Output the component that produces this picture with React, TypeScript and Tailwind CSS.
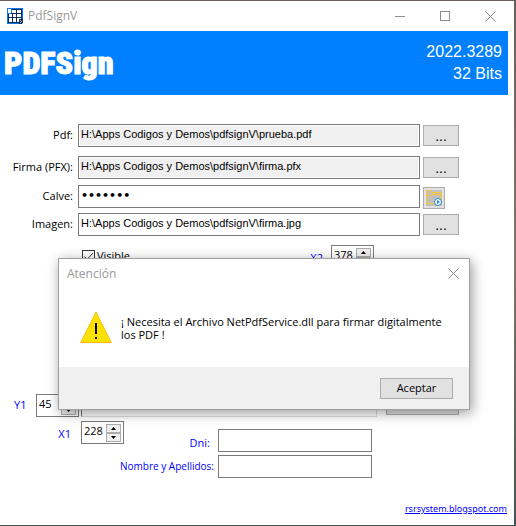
import { ComponentPropsWithoutRef, ReactNode } from 'react'
import { twMerge } from 'tailwind-merge'

const FIELD = 'h-[23px] min-w-0 flex-1 border border-[#7a7a7a] px-0.5 text-black outline-none'

function Button({ className, ...props }: ComponentPropsWithoutRef<'button'>) {
  return (
    <button
      type="button"
      {...props}
      className={twMerge(
        'flex h-[21px] shrink-0 items-center justify-center border border-[#adadad] bg-[#e1e1e1] text-black',
        className,
      )}
    />
  )
}

interface FieldRowProps extends ComponentPropsWithoutRef<'input'> {
  id: string
  label: string
  action?: ReactNode
}

function FieldRow({ id, label, action, className, ...props }: FieldRowProps) {
  return (
    <div className="flex h-[23px] items-center">
      <label htmlFor={id} className="mr-[5px] w-[73px] shrink-0 text-right whitespace-nowrap">
        {label}
      </label>
      <input
        id={id}
        {...props}
        className={twMerge(
          FIELD,
          "bg-white pb-[3px] font-['Liberation_Sans',Arial,sans-serif] read-only:bg-[#f0f0f0] read-only:shadow-[inset_0_0_0_1px_#fff]",
          className,
        )}
      />
      <div className="ml-[3px] w-9 shrink-0">
        {action ?? (
          <Button
            className="w-full font-['Liberation_Sans',Arial,sans-serif] text-sm leading-4"
            aria-label={`Buscar ${label}`}
          >
            ...
          </Button>
        )}
      </div>
    </div>
  )
}

interface SpinnerProps {
  id: string
  value: string
}

function Spinner({ id, value }: SpinnerProps) {
  const step =
    'flex h-[9px] w-[15px] items-center justify-center border border-[#adadad] bg-[#f0f0f0]'

  return (
    <div className="flex h-[23px] w-[43px] shrink-0 items-center border border-[#7a7a7a] bg-white">
      <input
        id={id}
        defaultValue={value}
        className="w-0 min-w-0 flex-1 pb-0.5 pl-0.5 text-black outline-none"
      />
      <div className="mr-0.5">
        <button type="button" aria-label="Subir" className={step}>
          <svg width="5" height="3" viewBox="0 0 5 3">
            <path d="M0 3 2.5 0 5 3z" />
          </svg>
        </button>
        <button type="button" aria-label="Bajar" className={step}>
          <svg width="5" height="3" viewBox="0 0 5 3">
            <path d="M0 0 2.5 3 5 0z" />
          </svg>
        </button>
      </div>
    </div>
  )
}

function CloseIcon() {
  return (
    <svg width="11" height="11" viewBox="0 0 11 11" stroke="#8c8c8c">
      <path d="M.5.5l10 10M10.5.5l-10 10" />
    </svg>
  )
}

function AppIcon() {
  return (
    <svg width="16" height="16" viewBox="0 0 16 16" shapeRendering="crispEdges">
      <path fill="#0b2c58" d="M0 0h16v16H0z" />
      <path
        fill="#fff"
        d="M1 1h3v4H1zM5 2h4v3H5zM10 2h4v3h-4zM2 6h3v3H2zM6 6h3v3H6zM10 6h4v3h-4zM2 10h3v4H2zM6 10h3v4H6zM10 10h4v1h-4zM10 11h2v3h-2z"
      />
      <path fill="#0a7cf0" d="M0 0h16v1H0zM0 1h1v14H0zM4 1h1v4H4zM1 5h3v1H1zM0 15h12v1H0zM15 1h1v10h-1z" />
      <path fill="#b8c8dc" d="M13 12h1v1h-1zM14 13h1v1h-1zM13 14h1v1h-1zM15 15h1v1h-1z" />
    </svg>
  )
}

function FolderIcon() {
  return (
    <svg width="16" height="16" viewBox="0 0 16 16" fill="none">
      <path fill="#c0c0c0" d="M0 0h16v16H0z" />
      <path stroke="#fcc62d" d="M.5 13.5V.5h4l1 2h9.500v11H.5zM.5 5.500h5l1-1H15" />
      <circle cx="12" cy="12" r="3.500" fill="#fff" stroke="#1c84d4" />
      <path fill="#1c84d4" d="M11 10l3 2-3 2z" />
    </svg>
  )
}

function WarningIcon() {
  return (
    <svg width="32" height="32" viewBox="0 0 32 32" className="shrink-0">
      <path d="M16 1 31.300 31.500H.7z" fill="#fde100" stroke="#fdb913" />
      <path d="M15 12h2v11h-2zM15 26h2v2h-2z" fill="#000" />
    </svg>
  )
}

function AttentionDialog() {
  return (
    <div
      role="alertdialog"
      aria-labelledby="dialog-title"
      aria-describedby="dialog-message"
      className="absolute top-[257px] right-[44px] left-[58px] border border-[#a0a0a0] bg-white shadow-[2px_3px_12px_rgba(0,0,0,0.4)]"
    >
      <div className="flex h-7 items-center justify-between pr-2.5 pl-2">
        <h2 id="dialog-title" className="pt-0.5 text-xs text-[#999]">
          Atención
        </h2>
        <button type="button" aria-label="Cerrar">
          <CloseIcon />
        </button>
      </div>
      <div className="flex h-20 items-center gap-[9px] pr-5 pl-[21px]">
        <WarningIcon />
        <p id="dialog-message" className="pt-0.5 leading-[13px] text-black">
          ¡ Necesita el Archivo NetPdfService.dll para firmar digitalmente los PDF !
        </p>
      </div>
      <div className="flex h-[42px] items-center justify-end bg-[#f0f0f0] pr-4">
        <Button className="w-[73px]">Aceptar</Button>
      </div>
    </div>
  )
}

export default function App() {
  return (
    <div className="min-h-screen bg-linear-to-b from-[#6b5f5c] via-[#8a7466] to-[#405550] pt-px pr-0.5 pb-px font-['Open_Sans','Noto_Sans',sans-serif] text-[11px]">
      <div className="relative flex min-h-[calc(100vh-2px)] flex-col bg-white">
        <header className="flex h-[30px] items-center px-[7px]">
          <AppIcon />
          <h1 className="ml-[5px] flex-1 text-xs text-[#999]">PdfSignV</h1>
          <div className="mr-[11px] flex items-center gap-[35px]">
            <button type="button" aria-label="Minimizar" className="w-2.5">
              <span className="block h-px bg-[#8c8c8c]" />
            </button>
            <button
              type="button"
              aria-label="Maximizar"
              className="size-2.5 border border-[#8c8c8c]"
            />
            <button type="button" aria-label="Cerrar">
              <CloseIcon />
            </button>
          </div>
        </header>

        <div className="mr-1.5 flex h-16 items-center justify-between bg-[#0080ff] pr-1.5 pl-1 text-white">
          <p className="font-[Impact,'Roboto_Condensed','Open_Sans_Condensed','Liberation_Sans_Narrow','Liberation_Sans',sans-serif] text-[32px] leading-8 font-black [-webkit-text-stroke:1px_white]">
            PDFSign
          </p>
          <p className="text-right font-['Liberation_Sans',Arial,sans-serif] text-base leading-[22px]">
            2022.3289
            <br />
            32 Bits
          </p>
        </div>

        <form className="pt-[29px] pr-[55px] text-black">
          <FieldRow
            id="pdf"
            label="Pdf:"
            readOnly
            value="H:\Apps Codigos y Demos\pdfsignV\prueba.pdf"
          />
          <div className="mt-[9px] mb-1.5">
            <FieldRow
              id="firma"
              label="Firma (PFX):"
              readOnly
              value="H:\Apps Codigos y Demos\pdfsignV\firma.pfx"
            />
          </div>
          <FieldRow
            id="clave"
            label="Calve:"
            type="password"
            defaultValue="1234567"
            className="pb-0.5 font-['DejaVu_Sans',sans-serif] font-bold"
            action={
              <Button aria-label="Ver certificado" className="mt-[3px] size-[22px]">
                <FolderIcon />
              </Button>
            }
          />
          <div className="mt-[5px]">
            <FieldRow
              id="imagen"
              label="Imagen:"
              defaultValue="H:\Apps Codigos y Demos\pdfsignV\firma.jpg"
            />
          </div>

          <div className="mt-[9px] flex items-center justify-between pr-[85px] pl-[82px]">
            <label className="flex items-center gap-0.5">
              <span className="relative size-[13px]">
                <input
                  type="checkbox"
                  defaultChecked
                  className="peer block size-full appearance-none border border-[#333] bg-white"
                />
                <svg
                  viewBox="0 0 13 13"
                  fill="none"
                  stroke="#333"
                  className="pointer-events-none absolute inset-0 hidden peer-checked:block"
                >
                  <path d="M2.500 6.500 5 9.500l6-6.500" />
                </svg>
              </span>
              Visible
            </label>
            <div className="flex items-center gap-2 text-[#0000ff]">
              <label htmlFor="x2" className="pt-1">
                X2
              </label>
              <Spinner id="x2" value="378" />
            </div>
          </div>

          <div className="flex h-[149px] items-end pl-3.5 text-[#0000ff]">
            <label htmlFor="y1" className="mb-1 w-[22px]">
              Y1
            </label>
            <Spinner id="y1" value="45" />
            <div className="ml-0.5 h-full flex-1 border border-[#dcdcdc] border-l-[#7a7a7a]" />
            <Button className="mb-0.5 ml-[9px] w-[73px]">Firmar</Button>
          </div>

          <div className="flex items-start pt-1 text-[#0000ff]">
            <div className="flex w-[124px] shrink-0 items-center justify-end gap-2.5">
              <label htmlFor="x1" className="pt-1">
                X1
              </label>
              <Spinner id="x1" value="228" />
            </div>
            <div className="mr-[87px] -ml-2.5 flex-1 space-y-[3px] pt-2">
              <div className="flex h-[23px] items-center">
                <label htmlFor="dni" className="mr-1 w-[100px] shrink-0 pt-1.5 pr-1 text-right">
                  Dni:
                </label>
                <input id="dni" className={FIELD} />
              </div>
              <div className="flex h-[23px] items-center">
                <label
                  htmlFor="nombre"
                  className="mr-1 w-[100px] shrink-0 text-right text-[10px] whitespace-nowrap"
                >
                  Nombre y Apellidos:
                </label>
                <input id="nombre" className={FIELD} />
              </div>
            </div>
          </div>
        </form>

        <footer className="mt-auto flex justify-end pr-[7px] pb-[9px]">
          <a
            href="#"
            className="font-['Noto_Sans',sans-serif] text-[9px] leading-[14px] text-[#0000ff] underline"
          >
            rsrsystem.blogspot.com
          </a>
        </footer>

        <AttentionDialog />
      </div>
    </div>
  )
}
